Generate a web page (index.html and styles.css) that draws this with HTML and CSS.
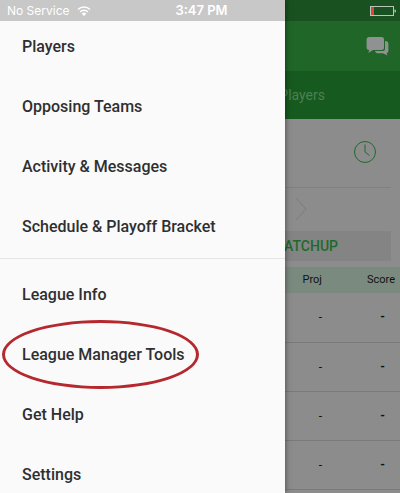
FILE: index.html
```html
<!DOCTYPE html>
<html lang="en">
<head>
    <meta charset="UTF-8">
    <meta name="viewport" content="width=device-width, initial-scale=1.0">
    <title>Fantasy League</title>
    <link rel="stylesheet" href="styles.css">
</head>
<body>
    <main class="app">
        <header class="topbar">
            <button type="button" class="icon-button" aria-label="Messages">
                <svg width="24" height="20" viewBox="0 0 24 20">
                    <path d="M19 4C21.500 4 22.400 5 22.400 7v6.500c0 1.500-.7 2.300-1.800 2.700l.8 2.300-4.400-2.200h-5c-1.500 0-2.500-.6-3-2.300h7.500c1.700 0 2.500-.8 2.500-2.500z" />
                    <path class="front" d="M3.300 0h12C17.500 0 18 1 18 2.500v8c0 1.700-.8 2.500-2.500 2.500H7l-4.700 3L3.300 13C1.300 13 .6 12 .6 10.500v-8C.6 1 1.500 0 3.300 0z" />
                </svg>
            </button>
        </header>
        <nav class="tabs">
            <a href="#players">Players</a>
        </nav>
        <section class="team">
            <svg width="24" height="24" viewBox="0 0 24 24">
                <circle cx="12" cy="12" r="10.500" />
                <path d="M12 4.500v7.500l4.500 3.500" />
            </svg>
        </section>
        <div class="pager">
            <svg width="12" height="24" viewBox="0 0 12 24">
                <path d="M1 1l10 11L1 23" />
            </svg>
        </div>
        <button type="button" class="matchup">MATCHUP</button>
        <table class="scores">
            <thead>
                <tr><th></th><th>Proj</th><th>Score</th></tr>
            </thead>
            <tbody>
                <tr><td></td><td>-</td><td>-</td></tr>
                <tr><td></td><td>-</td><td>-</td></tr>
                <tr><td></td><td>-</td><td>-</td></tr>
                <tr><td></td><td>-</td><td>-</td></tr>
            </tbody>
        </table>
    </main>

    <!-- Side menu, slides over the app -->
    <nav class="drawer">
        <ul>
            <li><a href="#players">Players</a></li>
            <li><a href="#teams">Opposing Teams</a></li>
            <li><a href="#activity">Activity &amp; Messages</a></li>
            <li><a href="#schedule">Schedule &amp; Playoff Bracket</a></li>
        </ul>
        <ul>
            <li><a href="#info">League Info</a></li>
            <li><a href="#tools" class="circled">League Manager Tools</a></li>
            <li><a href="#help">Get Help</a></li>
            <li><a href="#settings">Settings</a></li>
        </ul>
    </nav>

    <div class="status">
        <span class="carrier">
            No Service
            <svg width="14" height="10" viewBox="0 0 14 10">
                <path d="M1 3.500a8.500 8.500 0 0 1 12 0M3.200 5.900a5.400 5.400 0 0 1 7.600 0" />
                <path class="dot" d="M7 10L4.800 7.700a3.100 3.100 0 0 1 4.400 0z" />
            </svg>
        </span>
        <span class="time">3:47 PM</span>
        <svg class="battery" width="26" height="10" viewBox="0 0 26 10">
            <rect class="level" x="1" y="1" width="3" height="8" />
            <rect class="shell" x=".5" y=".5" width="23" height="9" />
            <path class="cap" d="M24.500 3.500H25q1 0 1 1.500t-1 1.500h-.5z" />
        </svg>
    </div>
</body>
</html>
```
FILE: styles.css
```css
* {
    box-sizing: border-box;
}
body {
    position: relative;
    min-height: 100vh;
    margin: 0;
    overflow: hidden;
    background-color: #8c8c8c;
    font-family: Roboto, "Liberation Sans", sans-serif;
}
a {
    color: inherit;
    text-decoration: none;
}
button {
    border: 0;
    font: inherit;
}
svg {
    display: block;
}
ul {
    margin: 0;
    padding: 0;
    list-style: none;
}

/* App behind the menu */
.app {
    height: 100vh;
    overflow: hidden;
}
.topbar {
    display: flex;
    justify-content: flex-end;
    padding: 37px 10px 14px;
    background-color: #206628;
}
.icon-button {
    padding: 0;
    background: none;
}
.icon-button path {
    fill: #8f9290;
}
.icon-button .front {
    stroke: #206628;
    stroke-width: 2;
    paint-order: stroke;
}
.tabs {
    display: flex;
    justify-content: flex-end;
    padding: 14px 75px 14px 0;
    background-color: #165a1f;
    color: #4d8052;
    font-size: 14px;
    line-height: 20px;
}
.team {
    display: flex;
    justify-content: flex-end;
    margin-right: 9px;
    padding: 21px 14px 23px 0;
    border-bottom: 1px solid #808080;
}
.team svg {
    fill: none;
    stroke: #1f6a2b;
}
.pager {
    display: flex;
    justify-content: flex-end;
    padding: 9px 93px 10px 0;
}
.pager svg {
    fill: none;
    stroke: #7c7c7c;
}
.matchup {
    display: block;
    width: calc(100% - 9px);
    padding: 5px 53px 5px 0;
    background-color: #848484;
    color: #1f6a2b;
    font-size: 14px;
    font-weight: 500;
    line-height: 20px;
    text-align: right;
}
.scores {
    width: 100%;
    margin-top: 6px;
    border-collapse: collapse;
    table-layout: fixed;
    color: #111;
    font-size: 11px;
    line-height: 16px;
    text-align: right;
}
.scores th {
    height: 26px;
    padding: 0;
    background-color: #7b8a7f;
    font-weight: 400;
    text-align: right;
}
.scores th:nth-child(2) {
    width: 40px;
}
.scores th:nth-child(3) {
    width: 78px;
    padding-right: 5px;
}
.scores td {
    height: 49px;
    padding: 0;
    border-bottom: 1px solid #7a7a7a;
    font-size: 12px;
}
.scores td:nth-child(3) {
    padding-right: 15px;
    font-weight: 700;
}

/* Side menu */
.drawer {
    position: absolute;
    top: 0;
    bottom: 0;
    left: 0;
    width: calc(100% - 115px);
    padding-top: 21px;
    overflow: hidden;
    background-color: #fafafa;
    box-shadow: 0 0 6px rgba(0, 0, 0, 0.5);
    color: #2f2f31;
    font-size: 16px;
    font-weight: 500;
    line-height: 20px;
}
.drawer ul {
    display: flex;
    flex-direction: column;
    align-items: flex-start;
    gap: 40px;
    padding: 16px 22px 21px;
}
.drawer ul + ul {
    padding-top: 26px;
    border-top: 1px solid #e4e4e4;
}
.circled {
    position: relative;
}
.circled::after {
    content: "";
    position: absolute;
    inset: -25px -14px -25px -20px;
    border: 3px solid #b5282e;
    border-radius: 50%;
}

/* Status bar */
.status {
    position: absolute;
    top: 0;
    left: 0;
    right: 0;
    display: grid;
    grid-template-columns: 1fr auto 1fr;
    align-items: center;
    padding: 0 4px 0 7px;
    background-color: rgba(0, 0, 0, 0.2);
    color: #fff;
    font-family: Inter, "Liberation Sans", sans-serif;
    font-size: 12px;
    line-height: 21px;
}
.carrier {
    display: flex;
    align-items: center;
    gap: 7px;
}
.carrier path {
    fill: none;
    stroke: #fff;
    stroke-width: 1.5;
}
.carrier .dot {
    fill: #fff;
    stroke: none;
}
.time {
    font-size: 13px;
    font-weight: 600;
}
.battery {
    justify-self: end;
}
.shell {
    fill: none;
    stroke: #b9c4ba;
}
.level {
    fill: #d8453a;
}
.cap {
    fill: #b9c4ba;
}
```
